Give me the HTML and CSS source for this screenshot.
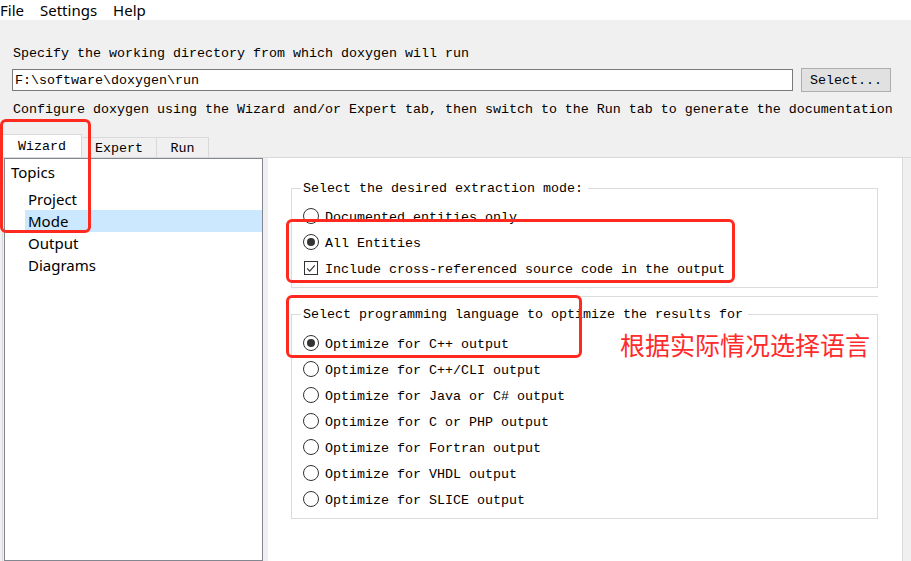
FILE: index.html
```html
<!DOCTYPE html>
<html>
<head>
<meta charset="utf-8">
<link rel="stylesheet" href="styles.css">
</head>
<body>
<div class="menubar"><span>File</span><span>Settings</span><span>Help</span></div>
<div class="top">
  <div class="label">Specify the working directory from which doxygen will run</div>
  <div class="dirrow">
    <div class="input">F:\software\doxygen\run</div>
    <div class="btn">Select...</div>
  </div>
  <div class="label">Configure doxygen using the Wizard and/or Expert tab, then switch to the Run tab to generate the documentation</div>
</div>
<div class="tabs">
  <div class="tab active t-wizard">Wizard</div>
  <div class="tab t-expert">Expert</div>
  <div class="tab t-run">Run</div>
</div>
<div class="pane">
  <div class="tree">
    <div class="topic">Topics</div>
    <div class="item">Project</div>
    <div class="item selected">Mode</div>
    <div class="item">Output</div>
    <div class="item">Diagrams</div>
  </div>
  <div class="splitter"></div>
  <div class="content">
    <fieldset class="group g1">
      <legend>Select the desired extraction mode:</legend>
      <div class="row"><span class="radio"></span>Documented entities only</div>
      <div class="row"><span class="radio on"></span>All Entities</div>
      <div class="row"><span class="check"><svg width="13" height="13" viewBox="0 0 13 13"><path d="M2.3 6.3 L5.1 9.3 L10.6 3.2" fill="none" stroke="#333" stroke-width="1.2"/></svg></span>Include cross-referenced source code in the output</div>
    </fieldset>
    <div class="sep"></div>
    <fieldset class="group g2">
      <legend>Select programming language to optimize the results for</legend>
      <div class="row"><span class="radio on"></span>Optimize for C++ output</div>
      <div class="row"><span class="radio"></span>Optimize for C++/CLI output</div>
      <div class="row"><span class="radio"></span>Optimize for Java or C# output</div>
      <div class="row"><span class="radio"></span>Optimize for C or PHP output</div>
      <div class="row"><span class="radio"></span>Optimize for Fortran output</div>
      <div class="row"><span class="radio"></span>Optimize for VHDL output</div>
      <div class="row"><span class="radio"></span>Optimize for SLICE output</div>
    </fieldset>
  </div>
  <div class="rightgap"></div>
</div>
<div class="note">根据实际情况选择语言</div>
<div class="mark m1"></div>
<div class="mark m2"></div>
<div class="mark m3"></div>
</body>
</html>
```
FILE: styles.css
```css
html, body {
  margin: 0;
  padding: 0;
}
body {
  position: relative;
  width: 911px;
  height: 561px;
  overflow: hidden;
  background: #f0f0f0;
  color: #000;
  font-family: "Liberation Mono", monospace;
  font-size: 13.33px;
  display: flex;
  flex-direction: column;
}
.menubar {
  height: 20px;
  background: #fff;
  display: flex;
  gap: 16px;
  font-family: "Noto Sans", sans-serif;
  font-size: 15px;
  line-height: 20px;
  flex: none;
}
.top {
  padding: 0 20px 0 12px;
  flex: none;
}
.label {
  height: 16px;
  line-height: 16px;
  padding-top: 2px;
  padding-left: 1px;
  white-space: nowrap;
  margin-top: 8px;
}
.top .label:first-child {
  margin-top: 24px;
}
.dirrow {
  display: flex;
  align-items: center;
  gap: 8px;
  height: 24px;
  margin-top: 6px;
}
.input {
  flex: 1;
  height: 22px;
  box-sizing: border-box;
  border: 1px solid #7a7a7a;
  background: #fff;
  line-height: 21px;
  padding-left: 2px;
}
.btn {
  width: 90px;
  height: 24px;
  box-sizing: border-box;
  border: 1px solid #adadad;
  background: #e1e1e1;
  text-align: center;
  line-height: 24px;
}
.tabs {
  display: flex;
  align-items: flex-end;
  height: 23px;
  margin-top: 16px;
  padding-left: 2px;
  flex: none;
}
.tab {
  box-sizing: border-box;
  height: 20px;
  border: 1px solid #d9d9d9;
  border-bottom: none;
  border-left: none;
  background: #f0f0f0;
  text-align: center;
  line-height: 21px;
}
.tab.active {
  height: 23px;
  line-height: 23px;
  background: #fff;
  border-left: 1px solid #d9d9d9;
}
.t-wizard { width: 80px; }
.t-expert { width: 75px; }
.t-run { width: 52px; }
.pane {
  flex: 1;
  display: flex;
  border-top: 1px solid #d9d9d9;
  margin-left: 2px;
  border-left: 1px solid #d9d9d9;
  min-height: 0;
}
.tree {
  width: 259px;
  box-sizing: border-box;
  margin-left: 1px;
  border: 1px solid #828790;
  background: #fff;
  font-family: "Noto Sans", sans-serif;
  font-size: 15px;
  padding-top: 2px;
}
.topic {
  height: 22px;
  line-height: 22px;
  padding-left: 6px;
  margin-bottom: 5px;
}
.item {
  height: 22px;
  line-height: 22px;
  margin-left: 20px;
  padding-left: 3px;
}
.item.selected {
  background: #cce8ff;
}
.splitter {
  width: 5px;
  flex: none;
}
.content {
  width: 635px;
  box-sizing: border-box;
  background: #fff;
  border-right: 1px solid #d9d9d9;
  padding: 21px 0 0 23px;
  flex: none;
}
.group {
  width: 587px;
  box-sizing: border-box;
  margin: 0;
  border: 1px solid #dcdcdc;
  padding: 6px 0 6px 11px;
}
.g2 {
  padding-top: 7px;
  margin-top: 8px;
}
legend {
  padding: 2px 5px 0 2px;
  margin-left: -2px;
  line-height: 16px;
  height: 16px;
}
.row {
  height: 26px;
  box-sizing: border-box;
  padding-top: 2px;
  display: flex;
  align-items: center;
  white-space: nowrap;
}
.radio {
  width: 16px;
  height: 16px;
  box-sizing: border-box;
  border: 1px solid #333;
  border-radius: 50%;
  background: #fff;
  margin-right: 6px;
  margin-top: -2px;
  display: flex;
  align-items: center;
  justify-content: center;
  flex: none;
}
.radio.on::after {
  content: "";
  width: 8px;
  height: 8px;
  border-radius: 50%;
  background: #333;
}
.check {
  width: 14px;
  height: 14px;
  box-sizing: border-box;
  border: 1px solid #333;
  background: #fff;
  margin: -2px 7px 0 1px;
  display: flex;
  align-items: center;
  justify-content: center;
  flex: none;
}
.check svg {
  display: block;
}
.sep {
  width: 587px;
  height: 1px;
  background: #dcdcdc;
  margin-top: 8px;
}
.note {
  position: absolute;
  left: 620px;
  top: 328px;
  font-family: "Noto Sans CJK SC", sans-serif;
  font-size: 25px;
  line-height: 32px;
  color: #ff2a2a;
  white-space: nowrap;
}
.mark {
  position: absolute;
  box-sizing: border-box;
  border: 3px solid #ff2a1f;
  border-radius: 6px;
}
.m1 { left: 0; top: 119px; width: 91px; height: 114px; }
.m2 { left: 286px; top: 219px; width: 449px; height: 64px; }
.m3 { left: 286px; top: 295px; width: 296px; height: 63px; }
```
